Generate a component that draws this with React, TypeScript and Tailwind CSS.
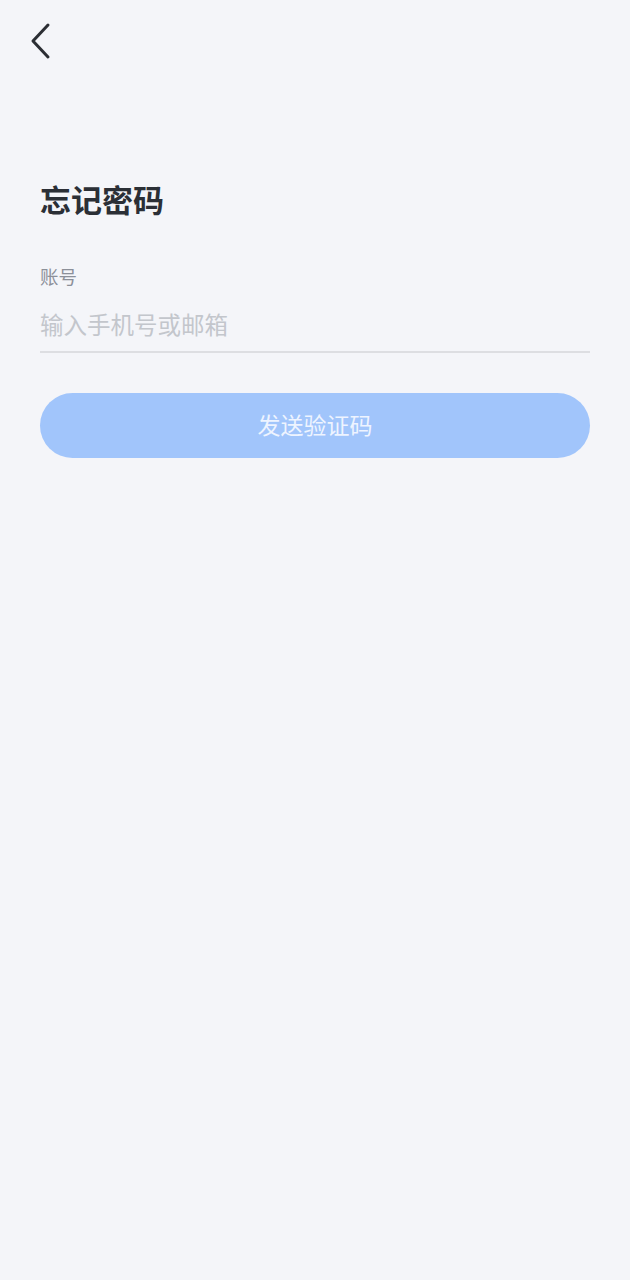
export default function App() {
  return (
    <div
      className="min-h-[1280px] w-full bg-[#f4f5f9]"
      style={{ fontFamily: '"Noto Sans", "Noto Sans CJK SC", sans-serif' }}
    >
      <div className="h-[82px] px-[28px] pt-[22px]">
        <svg width="28" height="38" viewBox="0 0 28 38" fill="none">
          <path d="M20 3 L5 19 L20 35" stroke="#2b2e34" strokeWidth="3" strokeLinecap="round" strokeLinejoin="round" />
        </svg>
      </div>

      <div className="px-[40px] pt-[98px]">
        <h1 className="text-[31px] font-bold leading-[40px] text-[#2b2f36]">忘记密码</h1>

        <div className="mt-[44px] text-[18.5px] leading-[26px] text-[#8c9099]">账号</div>
        <div className="mt-[19px] border-b-2 border-[#dddee2] pb-[9px]">
          <input
            placeholder="输入手机号或邮箱"
            className="w-full bg-transparent text-[23.5px] leading-[33px] text-[#2b2f36] outline-none placeholder:text-[#c3c6cc]"
          />
        </div>

        <button className="mt-[40px] flex h-[65px] w-full items-center justify-center rounded-full bg-[#a1c5fb] text-[23px] text-[#eef4ff]">
          发送验证码
        </button>
      </div>
    </div>
  );
}
